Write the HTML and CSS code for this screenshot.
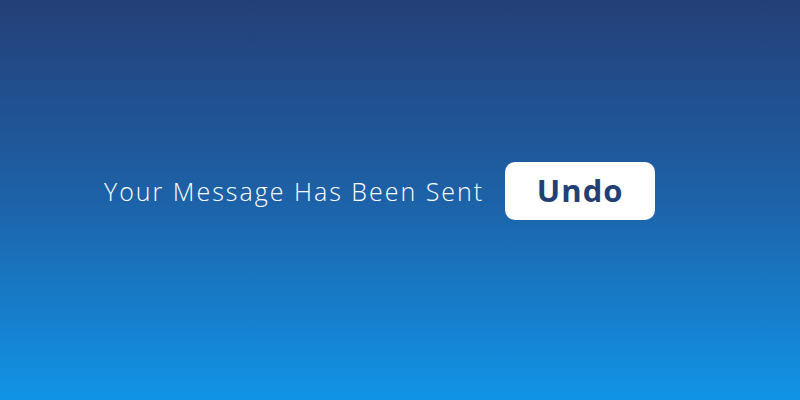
FILE: index.html
```html
<!DOCTYPE html>
<html lang="en">
<head>
<meta charset="utf-8">
<title>Message Sent</title>
<link rel="stylesheet" href="styles.css">
</head>
<body>
<main class="stage">
  <div class="toast">
    <span class="toast-text">Your Message Has Been Sent</span>
    <button class="undo-btn" type="button">Undo</button>
  </div>
</main>
</body>
</html>
```
FILE: styles.css
```css
html, body {
  margin: 0;
  padding: 0;
  width: 100%;
  height: 100%;
}
body {
  background: linear-gradient(to bottom, #243f77 0%, #1d62a8 50%, #1194e6 100%);
  font-family: "Open Sans", "Liberation Sans", sans-serif;
}
.stage {
  height: 400px;
  display: flex;
  align-items: center;
  justify-content: flex-start;
  padding-left: 104px;
  box-sizing: border-box;
}
.toast {
  display: flex;
  align-items: center;
  gap: 21px;
  margin-top: -18px;
}
.toast-text {
  color: #ffffff;
  font-size: 25px;
  font-weight: 300;
  letter-spacing: 2px;
}
.undo-btn {
  width: 150px;
  height: 58px;
  border: none;
  border-radius: 10px;
  background: #ffffff;
  color: #243f73;
  font-family: "Open Sans", "Liberation Sans", sans-serif;
  font-size: 31px;
  font-weight: 700;
  letter-spacing: 1px;
  padding: 0 0 2px;
  cursor: pointer;
}
```
